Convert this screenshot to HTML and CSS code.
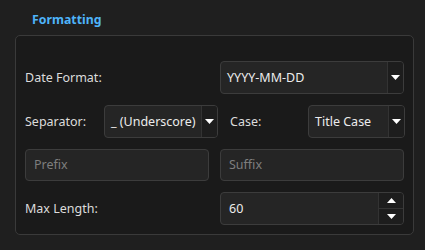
FILE: index.html
```html
<!DOCTYPE html>
<html>
<head>
<meta charset="utf-8">
<link rel="stylesheet" href="styles.css">
</head>
<body>
<div class="panel">
  <div class="title">Formatting</div>
  <div class="group">
    <div class="row">
      <div class="half label">Date Format:</div>
      <div class="half combo"><span class="val">YYYY-MM-DD</span><span class="arrow"><svg width="9" height="5" viewBox="0 0 9 5"><path d="M0 0H9L4.5 5Z" fill="#fff"/></svg></span></div>
    </div>
    <div class="row">
      <div class="label sep-label">Separator:</div>
      <div class="combo sep-combo"><span class="val">_ (Underscore)</span><span class="arrow"><svg width="9" height="5" viewBox="0 0 9 5"><path d="M0 0H9L4.5 5Z" fill="#fff"/></svg></span></div>
      <div class="label case-label">Case:</div>
      <div class="combo case-combo"><span class="val">Title Case</span><span class="arrow"><svg width="9" height="5" viewBox="0 0 9 5"><path d="M0 0H9L4.5 5Z" fill="#fff"/></svg></span></div>
    </div>
    <div class="row">
      <div class="half input placeholder">Prefix</div>
      <div class="half input placeholder">Suffix</div>
    </div>
    <div class="row">
      <div class="half label">Max Length:</div>
      <div class="half combo spin"><span class="val">60</span><span class="spin-btns"><span class="sbtn"><svg width="9" height="5" viewBox="0 0 9 5"><path d="M0 5H9L4.5 0Z" fill="#fff"/></svg></span><span class="sbtn"><svg width="9" height="5" viewBox="0 0 9 5"><path d="M0 0H9L4.5 5Z" fill="#fff"/></svg></span></span></div>
    </div>
  </div>
</div>
</body>
</html>
```

FILE: styles.css
```css
html, body {
  margin: 0;
  padding: 0;
  background: #1f1f1f;
  width: 425px;
  height: 250px;
  overflow: hidden;
}
body {
  font-family: "Noto Sans", "Open Sans", sans-serif;
  font-size: 12.5px;
  color: #e2e2e2;
}
.panel {
  padding: 0 11px 0 15px;
}
.title {
  height: 35px;
  box-sizing: border-box;
  padding: 11px 0 0 17px;
  font-weight: bold;
  font-size: 12.3px;
  color: #4eb4fa;
  line-height: 18px;
}
.group {
  width: 399px;
  height: 200px;
  box-sizing: border-box;
  border: 1px solid #3a3a3a;
  border-radius: 5px;
  background: #1a1a1a;
  padding: 25px 9px 9px 9px;
  display: flex;
  flex-direction: column;
  gap: 11px;
}
.row {
  display: flex;
  height: 33px;
  gap: 11px;
  align-items: stretch;
}
.half {
  width: 184px;
  flex: none;
}
.label {
  display: flex;
  align-items: center;
  color: #dcdcdc;
}
.combo, .input {
  box-sizing: border-box;
  border: 1px solid #3c3c3c;
  border-radius: 4px;
  background: #252525;
  display: flex;
  align-items: stretch;
  overflow: hidden;
}
.combo .val {
  flex: 1;
  display: flex;
  align-items: center;
  padding-left: 6px;
  color: #ececec;
}
.arrow {
  width: 15px;
  flex: none;
  background: #1d1d1d;
  border-left: 1px solid #333;
  display: flex;
  align-items: center;
  justify-content: center;
}
.input {
  display: flex;
  align-items: center;
  padding-left: 8px;
}
.placeholder {
  color: #7e7e7e;
}
.sep-label {
  width: 68px;
  flex: none;
}
.sep-combo {
  width: 114px;
  flex: none;
}
.case-label {
  width: 67px;
  flex: none;
  padding-left: 1px;
}
.case-combo {
  width: 97px;
  flex: none;
}
.spin .val {
  padding-left: 8px;
}
.spin-btns {
  width: 24px;
  flex: none;
  display: flex;
  flex-direction: column;
  background: #1d1d1d;
  border-left: 1px solid #333;
}
.sbtn {
  flex: 1;
  display: flex;
  align-items: center;
  justify-content: center;
}
.sbtn + .sbtn {
  border-top: 1px solid #333;
}
```
